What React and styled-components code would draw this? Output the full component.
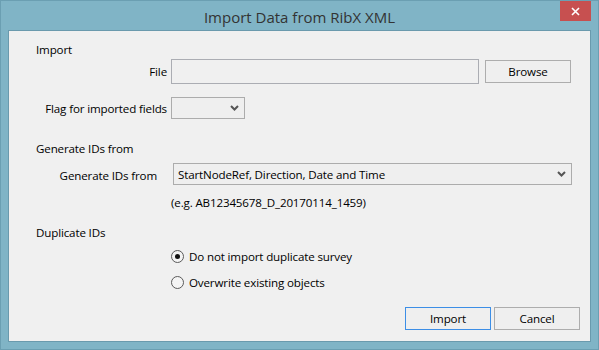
import React from 'react'
import styled, { createGlobalStyle } from 'styled-components'

const Global = createGlobalStyle`
  html, body {
    margin: 0;
    padding: 0;
    background: #80b5c7;
  }
  * {
    box-sizing: border-box;
  }
`

const Window = styled.div`
  width: 599px;
  height: 350px;
  display: flex;
  flex-direction: column;
  background: #80b4c6;
  border: 1px solid #6b9fb2;
  padding: 0 7px 7px 7px;
  font-family: 'Open Sans', 'Noto Sans', sans-serif;
  font-size: 11.6px;
  letter-spacing: -0.15px;
  color: #000;
`

const TitleBar = styled.div`
  height: 29px;
  display: grid;
  grid-template-columns: 1fr auto 1fr;
  align-items: center;
`

const Title = styled.div`
  grid-column: 2;
  font-size: 15px;
  letter-spacing: 0;
  color: #333;
  padding-top: 2px;
`

const Close = styled.div`
  grid-column: 3;
  justify-self: end;
  align-self: start;
  width: 31px;
  height: 20px;
  background: #c75050;
  display: flex;
  align-items: center;
  justify-content: center;
`

const Client = styled.div`
  flex: 1;
  display: flex;
  flex-direction: column;
  background: #f0f0f0;
  border: 1px solid #6a9aad;
  padding: 11px 10px 0 27px;
`

const Heading = styled.div`
  line-height: 16px;
  height: 16px;
  margin-top: ${p => p.$top || 0}px;
`

const Row = styled.div`
  display: grid;
  grid-template-columns: ${p => p.$label}px auto auto;
  column-gap: ${p => p.$gap}px;
  align-items: center;
  justify-content: start;
  margin-top: ${p => p.$top || 0}px;
`

const Label = styled.div`
  text-align: right;
  white-space: nowrap;
  padding-top: ${p => p.$pt || 0}px;
`

const TextBox = styled.div`
  width: 308px;
  height: 25px;
  background: #f0f0f0;
  border: 1px solid #abadb3;
`

const Button = styled.div`
  width: 86px;
  height: 23px;
  display: flex;
  align-items: center;
  justify-content: center;
  background: #efefef;
  border: 1px solid ${p => (p.$default ? '#3c8ee6' : '#adadad')};
  margin-left: ${p => p.$left || 0}px;
`

const Combo = styled.div`
  width: ${p => p.$width}px;
  height: 22px;
  display: flex;
  align-items: center;
  justify-content: space-between;
  padding: 0 5px 0 4px;
  background: #efefef;
  border: 1px solid #acacac;
  white-space: nowrap;
`

const Hint = styled.div`
  line-height: 16px;
  margin: 10px 0 0 135px;
`

const RadioRow = styled.div`
  display: flex;
  align-items: center;
  gap: 5px;
  height: 16px;
  margin: ${p => p.$top}px 0 0 135px;
`

const RadioCircle = styled.span`
  width: 13px;
  height: 13px;
  border-radius: 50%;
  border: 1px solid #5a5a5a;
  background: #f4f4f4;
  display: flex;
  align-items: center;
  justify-content: center;

  &::after {
    content: '';
    display: ${p => (p.$checked ? 'block' : 'none')};
    width: 5px;
    height: 5px;
    border-radius: 50%;
    background: #111;
  }
`

const Footer = styled.div`
  display: flex;
  justify-content: flex-end;
  margin-top: 17px;
`

const Chevron = () => (
  <svg width="9" height="6" viewBox="0 0 9 6">
    <polyline points="1,1 4.5,4.5 8,1" fill="none" stroke="#555" strokeWidth="2" />
  </svg>
)

export default function App() {
  return (
    <>
      <Global />
      <Window>
        <TitleBar>
          <Title>Import Data from RibX XML</Title>
          <Close>
            <svg width="9" height="9" viewBox="0 0 9 9">
              <path d="M1 1 L8 8 M8 1 L1 8" stroke="#fff" strokeWidth="1.6" />
            </svg>
          </Close>
        </TitleBar>
        <Client>
          <Heading>Import</Heading>
          <Row $label={131} $gap={4} $top={1}>
            <Label>File</Label>
            <TextBox />
            <Button $left={2}>Browse</Button>
          </Row>
          <Row $label={131} $gap={4} $top={13}>
            <Label>Flag for imported fields</Label>
            <Combo $width={74}>
              <span />
              <Chevron />
            </Combo>
          </Row>
          <Heading $top={22}>Generate IDs from</Heading>
          <Row $label={121} $gap={16} $top={6}>
            <Label $pt={3}>Generate IDs from</Label>
            <Combo $width={399}>
              <span>StartNodeRef, Direction, Date and Time</span>
              <Chevron />
            </Combo>
          </Row>
          <Hint>(e.g. AB12345678_D_20170114_1459)</Hint>
          <Heading $top={14}>Duplicate IDs</Heading>
          <RadioRow $top={7}>
            <RadioCircle $checked />
            <span>Do not import duplicate survey</span>
          </RadioRow>
          <RadioRow $top={10}>
            <RadioCircle />
            <span>Overwrite existing objects</span>
          </RadioRow>
          <Footer>
            <Button $default>Import</Button>
            <Button $left={3}>Cancel</Button>
          </Footer>
        </Client>
      </Window>
    </>
  )
}
